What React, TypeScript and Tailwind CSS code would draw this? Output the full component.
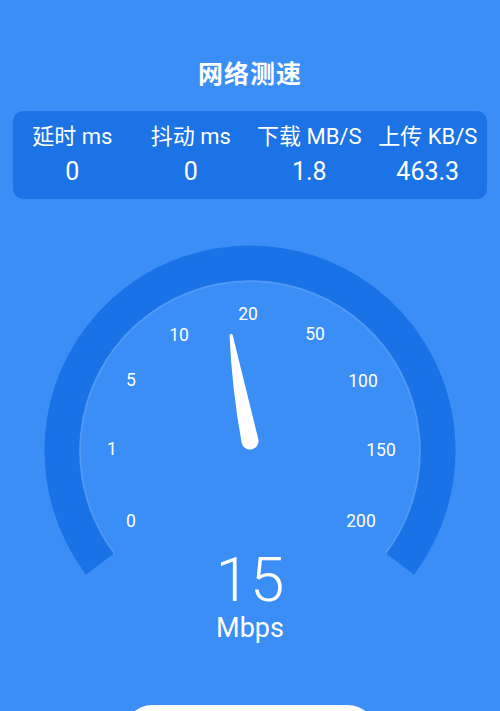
import React from "react";

const labels: { t: string; x: number; y: number }[] = [
  { t: "20", x: 248, y: 314 },
  { t: "10", x: 179, y: 335 },
  { t: "50", x: 315, y: 334 },
  { t: "5", x: 131, y: 380 },
  { t: "100", x: 363, y: 381 },
  { t: "1", x: 112, y: 449 },
  { t: "150", x: 381, y: 450 },
  { t: "0", x: 131, y: 521 },
  { t: "200", x: 361, y: 521 },
];

const stats = [
  { l: "延时 ms", v: "0" },
  { l: "抖动 ms", v: "0" },
  { l: "下载 MB/S", v: "1.8" },
  { l: "上传 KB/S", v: "463.3" },
];

function arc(cx: number, cy: number, r: number, deg: number) {
  const a = (deg * Math.PI) / 180;
  const x1 = cx - r * Math.cos(a);
  const y1 = cy + r * Math.sin(a);
  const x2 = cx + r * Math.cos(a);
  return `M ${x1.toFixed(1)} ${y1.toFixed(1)} A ${r} ${r} 0 1 1 ${x2.toFixed(1)} ${y1.toFixed(1)}`;
}

export default function App() {
  const font = { fontFamily: 'Roboto, "Noto Sans CJK SC", sans-serif' };
  return (
    <div
      className="w-[500px] h-[711px] bg-[#3a8ef6] overflow-hidden flex flex-col items-center text-white"
      style={font}
    >
      <div className="shrink-0 mt-[58px] h-[34px] leading-[34px] text-[25px] font-bold tracking-[1px]">
        网络测速
      </div>
      <div className="shrink-0 mt-[19px] w-[474px] h-[88px] rounded-[10px] bg-[#1b73e6] grid grid-cols-4 pt-[13px]">
        {stats.map((s) => (
          <div key={s.l} className="flex flex-col items-center">
            <div className="h-[26px] leading-[26px] text-[22px] whitespace-nowrap">{s.l}</div>
            <div className="mt-[7px] h-[30px] leading-[30px] text-[25px]">{s.v}</div>
          </div>
        ))}
      </div>
      <svg width="500" height="345" viewBox="0 0 500 345" className="mt-[41px] shrink-0">
        <path d={arc(250, 211, 188, 37)} fill="none" stroke="#1a72e7" strokeWidth="35" />
        <path
          d={arc(250, 211, 170, 37)}
          fill="none"
          stroke="rgba(255,255,255,0.12)"
          strokeWidth="2"
        />
        {labels.map((l) => (
          <text
            key={l.t}
            x={l.x}
            y={l.y - 240}
            fill="#ffffff"
            fontSize="17.5"
            textAnchor="middle"
            dominantBaseline="central"
            style={{ fontFamily: "Roboto, sans-serif" }}
          >
            {l.t}
          </text>
        ))}
        <path
          d="M 229.5 95.3 Q 231 92.3 232.6 94.8 L 258.4 199.5 A 8.5 8.5 0 0 1 241.6 202.5 Q 232 150 229.5 95.3 Z"
          fill="#ffffff"
        />
      </svg>
      <div className="shrink-0 -mt-[36px] h-[62px] leading-[62px] text-[62px] font-light">15</div>
      <div className="shrink-0 mt-[2px] h-[30px] leading-[30px] text-[27px]">Mbps</div>
      <div className="mt-[62px] w-[252px] h-[60px] shrink-0 rounded-[28px] bg-[#fdfefb]" />
    </div>
  );
}
